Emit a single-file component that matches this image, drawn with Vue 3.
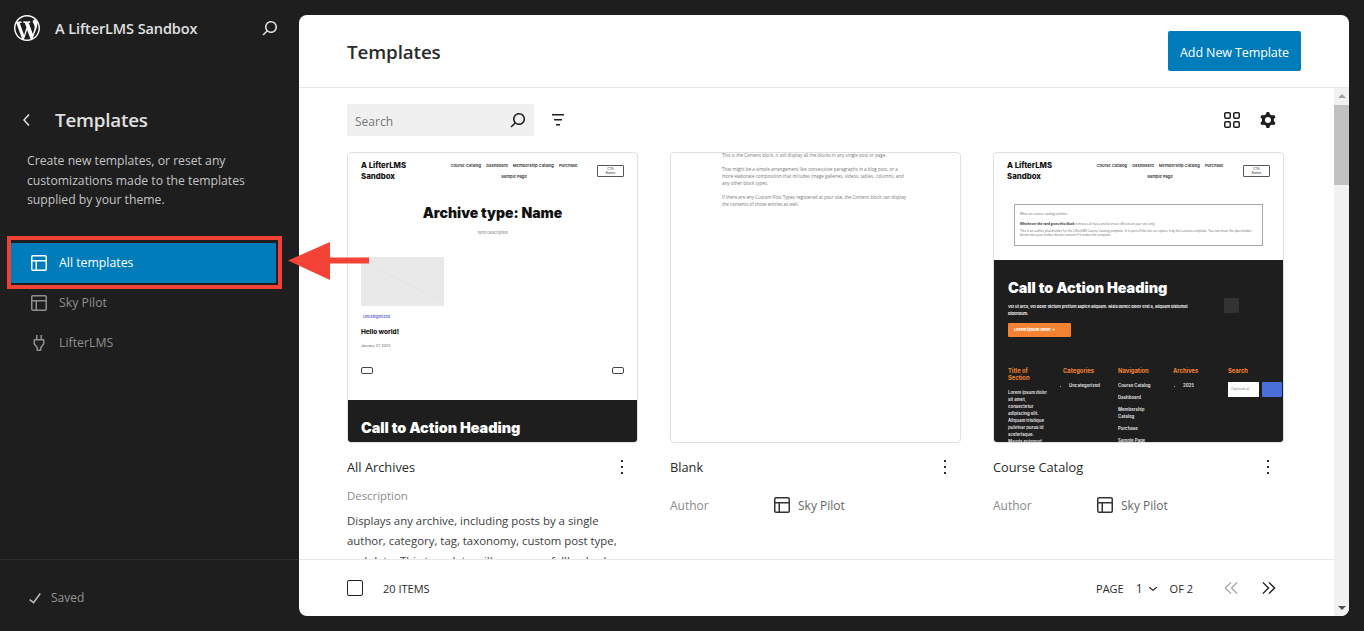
<script setup>
const icons = {
  search: 'M13 5c-3.3 0-6 2.7-6 6 0 1.4.5 2.7 1.3 3.7l-3.8 3.8 1.1 1.1 3.8-3.8c1 .8 2.3 1.3 3.7 1.3 3.3 0 6-2.7 6-6S16.3 5 13 5zm0 10.5c-2.5 0-4.5-2-4.5-4.5s2-4.5 4.5-4.5 4.5 2 4.5 4.5-2 4.5-4.5 4.5z',
  layout: 'M18 5.5H6a.5.5 0 00-.5.5v3h13V6a.5.5 0 00-.5-.5zm.5 5H10v8h8a.5.5 0 00.5-.5v-7.5zm-10 0h-3V18a.5.5 0 00.5.5h2.5v-8zM6 4h12a2 2 0 012 2v12a2 2 0 01-2 2H6a2 2 0 01-2-2V6a2 2 0 012-2z',
  chevronLeft: 'M14.6 7l-1.2-1L8 12l5.4 6 1.2-1-4.6-5z',
  plugin: 'M10.5 4v4h3V4H15v4h1.5a1 1 0 011 1v4l-3 4v2a1 1 0 01-1 1h-3a1 1 0 01-1-1v-2l-3-4V9a1 1 0 011-1H9V4h1.5zm.5 12.5v2h2v-2l3-4v-3H8v3l3 4z',
  check: 'M16.7 7.1l-6.3 8.5-3.3-2.5-.9 1.2 4.5 3.4L17.9 8z',
  funnel: 'M10 17.5H14V16H10V17.5ZM6 6V7.5H18V6H6ZM8 12.5H16V11H8V12.5Z',
  grid: 'M6 5.5h3a.5.5 0 01.5.5v3a.5.5 0 01-.5.5H6a.5.5 0 01-.5-.5V6a.5.5 0 01.5-.5zM4 6a2 2 0 012-2h3a2 2 0 012 2v3a2 2 0 01-2 2H6a2 2 0 01-2-2V6zm11-.5h3a.5.5 0 01.5.5v3a.5.5 0 01-.5.5h-3a.5.5 0 01-.5-.5V6a.5.5 0 01.5-.5zM13 6a2 2 0 012-2h3a2 2 0 012 2v3a2 2 0 01-2 2h-3a2 2 0 01-2-2V6zm5 8.5h-3a.5.5 0 00-.5.5v3a.5.5 0 00.5.5h3a.5.5 0 00.5-.5v-3a.5.5 0 00-.5-.5zM15 13a2 2 0 00-2 2v3a2 2 0 002 2h3a2 2 0 002-2v-3a2 2 0 00-2-2h-3zm-9 1.5h3a.5.5 0 01.5.5v3a.5.5 0 01-.5.5H6a.5.5 0 01-.5-.5v-3a.5.5 0 01.5-.5zM4 15a2 2 0 012-2h3a2 2 0 012 2v3a2 2 0 01-2 2H6a2 2 0 01-2-2v-3z',
  cog: 'M10.289 4.836A1 1 0 0111.275 4h1.306a1 1 0 01.987.836l.244 1.466c.787.26 1.503.679 2.108 1.218l1.393-.522a1 1 0 011.216.437l.653 1.13a1 1 0 01-.23 1.273l-1.148.944a6.025 6.025 0 010 2.435l1.149.946a1 1 0 01.23 1.272l-.653 1.13a1 1 0 01-1.216.437l-1.394-.522c-.605.54-1.32.958-2.108 1.218l-.244 1.466a1 1 0 01-.987.836h-1.306a1 1 0 01-.986-.836l-.244-1.466a5.995 5.995 0 01-2.108-1.218l-1.394.522a1 1 0 01-1.217-.436l-.653-1.131a1 1 0 01.23-1.272l1.149-.946a6.026 6.026 0 010-2.435l-1.148-.944a1 1 0 01-.23-1.272l.653-1.131a1 1 0 011.217-.437l1.393.522a5.994 5.994 0 012.108-1.218l.244-1.466zM14.929 12a3 3 0 11-6 0 3 3 0 016 0z',
  more: 'M13 19h-2v-2h2v2zm0-6h-2v-2h2v2zm0-6h-2V5h2v2z',
  down: 'M17.5 11.6L12 16l-5.5-4.4.9-1.2L12 14l4.5-3.6 1 1.2z'
}
const wp = 'M20 10c0-5.51-4.49-10-10-10C4.48 0 0 4.49 0 10c0 5.52 4.48 10 10 10 5.51 0 10-4.48 10-10zM7.78 15.37L4.37 6.22c.55-.02 1.17-.08 1.17-.08.5-.06.44-1.13-.06-1.11 0 0-1.45.11-2.37.11-.18 0-.37 0-.58-.01C4.12 2.69 6.87 1.11 10 1.11c2.33 0 4.45.87 6.05 2.34-.68-.11-1.65.39-1.65 1.58 0 .74.45 1.36.9 2.1.35.61.55 1.36.55 2.46 0 1.49-1.4 5-1.4 5l-3.03-8.37c.54-.02.82-.17.82-.17.5-.05.44-1.25-.06-1.22 0 0-1.44.12-2.38.12-.87 0-2.33-.12-2.33-.12-.5-.03-.56 1.2-.06 1.22l.92.08 1.26 3.41zM17.41 10c.24-.64.74-1.87.43-4.25.7 1.29 1.05 2.71 1.05 4.25 0 3.29-1.73 6.24-4.4 7.78.97-2.59 1.94-5.2 2.92-7.78zM6.1 18.09C3.12 16.65 1.11 13.53 1.11 10c0-1.3.23-2.48.72-3.59C3.25 10.3 4.67 14.2 6.1 18.09zm4.03-6.63l2.58 6.98c-.86.29-1.76.45-2.71.45-.79 0-1.57-.11-2.29-.33.81-2.38 1.62-4.74 2.42-7.1z'
const navLinks = ['Course Catalog', 'Dashboard', 'Membership Catalog', 'Purchase', 'Sample Page']
</script>

<template>
  <div class="root">
    <aside class="side">
      <div class="brand">
        <svg class="wp" viewBox="0 0 20 20"><path :d="wp" fill="#fff" fill-rule="evenodd" /></svg>
        <span class="site">A LifterLMS Sandbox</span>
        <svg class="i24 brand-search" viewBox="0 0 24 24"><path :d="icons.search" /></svg>
      </div>
      <div class="sec-head">
        <svg class="i24 back" viewBox="0 0 24 24"><path :d="icons.chevronLeft" /></svg>
        <h2>Templates</h2>
      </div>
      <p class="sec-desc">Create new templates, or reset any customizations made to the templates supplied by your theme.</p>
      <nav class="snav">
        <a class="sitem active"><svg class="i24" viewBox="0 0 24 24"><path :d="icons.layout" fill-rule="evenodd" /></svg>All templates</a>
        <a class="sitem"><svg class="i24" viewBox="0 0 24 24"><path :d="icons.layout" fill-rule="evenodd" /></svg>Sky Pilot</a>
        <a class="sitem"><svg class="i24" viewBox="0 0 24 24"><path :d="icons.plugin" fill-rule="evenodd" /></svg>LifterLMS</a>
      </nav>
      <div class="saved">
        <svg class="i24" viewBox="0 0 24 24"><path :d="icons.check" /></svg>
        <span>Saved</span>
      </div>
    </aside>

    <main class="panel">
      <header class="phead">
        <h1>Templates</h1>
        <button class="add">Add New Template</button>
      </header>
      <div class="pbody">
        <div class="pcol">
          <div class="scroll">
            <div class="tools">
              <div class="search">
                <span>Search</span>
                <svg class="i24" viewBox="0 0 24 24"><path :d="icons.search" /></svg>
              </div>
              <svg class="i24 funnel" viewBox="0 0 24 24"><path :d="icons.funnel" /></svg>
              <span class="spacer"></span>
              <svg class="i24" viewBox="0 0 24 24"><path :d="icons.grid" fill-rule="evenodd" /></svg>
              <svg class="i24 cog" viewBox="0 0 24 24"><path :d="icons.cog" fill-rule="evenodd" /></svg>
            </div>

            <div class="cards">
              <article class="card">
                <div class="thumb">
                  <div class="m-head">
                    <b class="m-logo">A LifterLMS Sandbox</b>
                    <div class="m-links"><span v-for="l in navLinks" :key="l">{{ l }}</span></div>
                    <span class="m-cta">CTA Button</span>
                  </div>
                  <div class="m-title">Archive type: Name</div>
                  <div class="m-term">Term Description</div>
                  <div class="m-img"></div>
                  <div class="m-cat">Uncategorized</div>
                  <div class="m-post">Hello world!</div>
                  <div class="m-date">January 27, 2025</div>
                  <div class="m-pager"><i></i><i></i></div>
                  <div class="m-dark one"><div class="m-cta-h">Call to Action Heading</div></div>
                </div>
                <div class="c-title"><span>All Archives</span><svg class="i24" viewBox="0 0 24 24"><path :d="icons.more" /></svg></div>
                <div class="c-label">Description</div>
                <p class="c-text">Displays any archive, including posts by a single author, category, tag, taxonomy, custom post type, and date. This template will serve as a fallback when</p>
              </article>

              <article class="card">
                <div class="thumb blank">
                  <p>This is the Content block, it will display all the blocks in any single post or page.</p>
                  <p>That might be a simple arrangement like consecutive paragraphs in a blog post, or a more elaborate composition that includes image galleries, videos, tables, columns, and any other block types.</p>
                  <p>If there are any Custom Post Types registered at your site, the Content block can display the contents of those entries as well.</p>
                </div>
                <div class="c-title"><span>Blank</span><svg class="i24" viewBox="0 0 24 24"><path :d="icons.more" /></svg></div>
                <div class="c-meta"><span class="lab">Author</span><svg class="i24" viewBox="0 0 24 24"><path :d="icons.layout" fill-rule="evenodd" /></svg><span>Sky Pilot</span></div>
              </article>

              <article class="card">
                <div class="thumb">
                  <div class="m-head">
                    <b class="m-logo">A LifterLMS Sandbox</b>
                    <div class="m-links"><span v-for="l in navLinks" :key="l">{{ l }}</span></div>
                    <span class="m-cta">CTA Button</span>
                  </div>
                  <div class="m-box">
                    <p>What are course catalog unlimits</p>
                    <p><b>Whichever the card gives this block</b> removes all noise preferences offered on your site only.</p>
                    <p>This is an outline placeholder for the LifterLMS Course Catalog template. It is part of this site so replace it by the Lessons template. You can move the placeholder blocks into your further blocks content if it makes the template.</p>
                  </div>
                  <div class="m-dark three">
                    <div class="m-cta-h">Call to Action Heading</div>
                    <div class="m-cta-row">
                      <p>Vel ut arcu, vel dolor dictum pretium sapien aliquam. Nisia donec dolor erat a, aliquam distumst bibendum.</p>
                      <i class="m-sq"></i>
                    </div>
                    <span class="m-orange">Lorem ipsum dolor →</span>
                    <div class="m-cols">
                      <div><h6>Title of Section</h6><p>Lorem ipsum dolor sit amet, consectetur adipiscing elit. Aliquam tristique pulvinar purus id scelerisque. Mauris euismod lacus id</p></div>
                      <div><h6>Categories</h6><ul><li>Uncategorized</li></ul></div>
                      <div><h6>Navigation</h6><p class="lk">Course Catalog</p><p class="lk">Dashboard</p><p class="lk">Membership Catalog</p><p class="lk">Purchase</p><p class="lk">Sample Page</p></div>
                      <div><h6>Archives</h6><ul class="ar"><li>2025</li></ul></div>
                      <div><h6>Search</h6><div class="m-s"><span>Optional pl</span><i></i></div></div>
                    </div>
                  </div>
                </div>
                <div class="c-title"><span>Course Catalog</span><svg class="i24" viewBox="0 0 24 24"><path :d="icons.more" /></svg></div>
                <div class="c-meta"><span class="lab">Author</span><svg class="i24" viewBox="0 0 24 24"><path :d="icons.layout" fill-rule="evenodd" /></svg><span>Sky Pilot</span></div>
              </article>
            </div>
          </div>

          <footer class="pfoot">
            <span class="cb"></span>
            <span class="items">20 ITEMS</span>
            <span class="spacer"></span>
            <span class="pg">PAGE</span>
            <span class="pg num">1</span>
            <svg class="i24 pg-down" viewBox="0 0 24 24"><path :d="icons.down" /></svg>
            <span class="pg">OF 2</span>
            <svg class="dbl off" viewBox="0 0 16 14"><path d="M7.5 1 1.5 7l6 6M14 1 8 7l6 6" /></svg>
            <svg class="dbl" viewBox="0 0 16 14"><path d="M2 1l6 6-6 6M8.500 1l6 6-6 6" /></svg>
          </footer>
        </div>
        <div class="sbar">
          <i class="arr up"></i>
          <i class="thumbbar"></i>
          <i class="arr dn"></i>
        </div>
      </div>
    </main>

    <div class="frame"></div>
    <svg class="arrow" viewBox="0 0 82 38"><path d="M0 18.500 42 0v15.500h39v6H42V38z" /></svg>
  </div>
</template>

<style>
html, body { margin: 0; background: #1e1e1e; }
</style>

<style scoped>
.root {
  position: relative; display: flex; width: 1364px; height: 631px; overflow: hidden;
  background: #1e1e1e; color: #1e1e1e;
  font-family: "Open Sans", "Noto Sans", sans-serif; font-size: 12px;
}
.i24 { width: 24px; height: 24px; flex: none; fill: currentColor; }
.spacer { flex: 1; }
h1, h2, p { margin: 0; }

/* sidebar */
.side { width: 299px; flex: none; display: flex; flex-direction: column; color: #e0e0e0; }
.brand { display: flex; align-items: center; height: 26px; margin: 15px 17px 0 14px; }
.wp { width: 26px; height: 26px; flex: none; }
.site { margin-left: 15px; font-size: 14.500px; font-weight: 600; letter-spacing: -.1px; color: #e0e0e0; }
.brand-search { margin-left: auto; color: #e0e0e0; }
.sec-head { display: flex; align-items: center; height: 30px; margin: 64px 0 0 15px; }
.back { color: #e0e0e0; }
.sec-head h2 { margin-left: 16px; font-size: 18.800px; font-weight: 600; letter-spacing: -.2px; color: #e0e0e0; }
.sec-desc { margin: 16px 30px 0 27px; font-size: 12.200px; line-height: 19.500px; color: #c4c4c4; }
.snav { display: flex; flex-direction: column; margin: 33px 23px 0 11px; }
.sitem { display: flex; align-items: center; gap: 8px; height: 40px; padding-left: 16px; font-size: 12.300px; color: #8f8f8f; }
.sitem.active { background: #007cba; color: #fff; font-weight: 500; border-radius: 1px; }
.saved { display: flex; align-items: center; gap: 4px; margin-top: auto; height: 72px; padding: 4px 0 0 23px; box-sizing: border-box; border-top: 1px solid #2f2f2f; color: #949494; font-size: 12px; }
.saved .i24 { color: #bdbdbd; }

/* panel */
.panel { flex: 1; margin: 15px 15px 15px 0; background: #fff; border-radius: 8px; overflow: hidden; display: flex; flex-direction: column; }
.phead { height: 73px; flex: none; box-sizing: border-box; border-bottom: 1px solid #e8e8e8; display: flex; align-items: center; justify-content: space-between; padding: 0 48px; }
.phead h1 { margin-top: 2px; font-size: 18.800px; font-weight: 600; letter-spacing: -.1px; color: #2a2a2a; }
.add { width: 133px; height: 40px; border: 0; border-radius: 2px; background: #007cba; color: #fff; font: 500 12.500px "Open Sans", sans-serif; letter-spacing: -.1px; padding: 2px 0 0; }
.pbody { flex: 1; min-height: 0; display: flex; }
.pcol { flex: 1; min-width: 0; display: flex; flex-direction: column; }
.scroll { flex: 1; min-height: 0; overflow: hidden; padding: 16px 50px 0 48px; }
.tools { display: flex; align-items: center; height: 32px; }
.search { width: 187px; height: 32px; box-sizing: border-box; background: #f0f0f0; display: flex; align-items: center; justify-content: space-between; padding: 2px 4px 0 8px; color: #757575; font-size: 12px; }
.search .i24 { margin-top: -2px; color: #1e1e1e; }
.funnel { margin-left: 12px; }
.cog { margin-left: 12px; margin-right: 4px; }

.cards { display: grid; grid-template-columns: repeat(3, 291px); gap: 32px; margin-top: 16px; }
.thumb { width: 291px; height: 291px; box-sizing: border-box; border: 1px solid #e0e0e0; border-radius: 4px; overflow: hidden; background: #fff; font-family: Inter, sans-serif; display: flow-root; }
.c-title { display: flex; align-items: center; justify-content: space-between; height: 24px; margin-top: 12px; padding-right: 4px; font-size: 12.800px; font-weight: 500; color: #2a2a2a; }
.c-label { margin-top: 7px; height: 20px; line-height: 20px; color: #8a8a8a; font-size: 11.400px; }
.c-text { margin-top: 5px; line-height: 20px; font-size: 11.400px; color: #3c3c3c; }
.c-meta { display: flex; align-items: center; height: 24px; margin-top: 14px; color: #666; font-size: 12px; }
.c-meta .lab { width: 100px; color: #8a8a8a; }
.c-meta .i24 { margin-right: 4px; color: #333; }

/* mini page */
.m-head { display: flex; align-items: flex-start; padding: 7px 13px 0; height: 40px; box-sizing: border-box; }
.m-logo { width: 80px; padding-right: 25px; box-sizing: border-box; font-size: 7.800px; line-height: 11px; font-weight: 800; color: #111; flex: none; }
.m-links { width: 146px; flex: none; display: flex; flex-wrap: wrap; justify-content: center; gap: 0 5px; font-size: 4.100px; line-height: 11px; font-weight: 600; color: #333; }
.m-cta { margin: 5px 0 0 auto; width: 27px; height: 12px; box-sizing: border-box; border: 1px solid #555; border-radius: 1px; font-size: 3.200px; line-height: 4px; text-align: center; padding: 1px 6px; flex: none; }
.m-title { margin-top: 11px; text-align: center; font-size: 14px; line-height: 18px; font-weight: 900; color: #111; }
.m-term { margin-top: 8px; text-align: center; font-size: 3.800px; line-height: 5px; color: #777; }
.m-img { width: 83px; height: 49px; margin: 22px 0 0 13px; background: linear-gradient(25deg, #e9e9e9 49.500%, #e0e0e0 50%, #e9e9e9 51%, #e9e9e9); }
.m-cat { margin: 8px 0 0 15px; font-size: 3.800px; line-height: 5px; font-weight: 600; color: #5a64c8; }
.m-post { margin: 9px 0 0 13px; font-size: 6.400px; line-height: 8px; font-weight: 800; color: #111; }
.m-date { margin: 8px 0 0 13px; font-size: 3.600px; line-height: 5px; color: #666; }
.m-pager { display: flex; justify-content: space-between; margin: 18px 13px 0; }
.m-pager i { width: 12px; height: 7px; box-sizing: border-box; border: 1px solid #444; border-radius: 2px; }
.m-dark { background: #1e1e1e; color: #fff; overflow: hidden; }
.m-dark.one { margin-top: 26px; height: 42px; padding: 20px 13px 0; box-sizing: border-box; }
.m-cta-h { font-size: 14.400px; line-height: 16px; font-weight: 900; color: #fff; white-space: nowrap; }
.m-box { margin: 11px 20px 0; height: 42px; box-sizing: border-box; border: 1px solid #a8a8a8; padding: 7px 5px 0; font-family: "Open Sans", sans-serif; font-size: 3.100px; line-height: 4px; color: #666; overflow: hidden; }
.m-box p { margin-bottom: 6px; }
.m-box p:nth-child(3) { margin-top: -3px; }
.m-box b { color: #333; }
.m-dark.three { margin-top: 14px; height: 200px; padding: 20px 1px 0 14px; box-sizing: border-box; }
.m-cta-row { display: flex; margin-top: 6px; }
.m-cta-row p { width: 198px; font-size: 3.900px; line-height: 7px; font-weight: 700; margin-top: 1px; color: #eee; }
.m-sq { width: 15px; height: 15px; margin: -4px 0 0 18px; background: #333; flex: none; }
.m-orange { display: block; width: 63px; height: 14px; margin-top: 6px; border-radius: 1px; background: #f58230; font-size: 4px; line-height: 14px; font-weight: 800; padding-left: 6px; box-sizing: border-box; }
.m-cols { display: grid; grid-template-columns: 55px 55px 55px 55px 55px; margin-top: 30px; font-size: 4.300px; line-height: 7px; font-weight: 700; color: #ddd; }
.m-cols h6 { margin: 0 0 8px; font-size: 5.800px; line-height: 7px; font-weight: 700; color: #f58230; }
.m-cols > div { padding-right: 14px; min-width: 0; }
.m-cols > div:last-child { padding-right: 0; }
.m-cols ul { margin: 0; padding-left: 6px; white-space: nowrap; }
.m-cols ul.ar { padding-left: 10px; }
.m-cols .lk { margin-bottom: 5px; }
.m-s { display: flex; gap: 3px; height: 15px; width: 54px; }
.m-s span { width: 31px; background: #fff; color: #888; font-size: 3.600px; line-height: 15px; padding-left: 3px; box-sizing: border-box; font-weight: 400; white-space: nowrap; overflow: hidden; }
.m-s i { width: 20px; background: #4a6fd8; border-radius: 1px; }

.blank { padding: 0 52px 0 51px; font-family: "Open Sans", sans-serif; font-size: 4.500px; line-height: 7px; color: #777; }
.blank p { margin-bottom: 7px; margin-top: 0; }
.blank p:first-child { margin-top: -1px; }

/* footer */
.pfoot { height: 57px; flex: none; box-sizing: border-box; border-top: 1px solid #e8e8e8; display: flex; align-items: center; padding: 0 58px 0 48px; font-size: 11px; color: #2a2a2a; }
.cb { width: 16px; height: 16px; box-sizing: border-box; border: 1px solid #1e1e1e; border-radius: 2px; }
.items { margin-left: 20px; font-weight: 500; }
.pg { font-size: 11px; }
.num { margin-left: 12px; font-size: 12px; }
.pg-down { width: 18px; height: 18px; margin: 0 8px 0 1px; }
.dbl { width: 15px; height: 14px; margin-left: 31px; fill: none; stroke: #1e1e1e; stroke-width: 1.500; }
.dbl:last-child { margin-left: 22px; }
.dbl.off { stroke: #a5a5a5; }

/* scrollbar */
.sbar { width: 15px; flex: none; background: #f1f1f1; display: flex; flex-direction: column; align-items: center; }
.arr { width: 0; height: 0; border-left: 4px solid transparent; border-right: 4px solid transparent; }
.arr.up { border-bottom: 4px solid #a3a3a3; margin-top: 6px; }
.arr.dn { border-top: 4px solid #505050; margin: auto 0 6px; }
.thumbbar { width: 15px; height: 80px; background: #c1c1c1; margin-top: 7px; }

/* annotation over the screenshot */
.frame { position: absolute; left: 7px; top: 236px; width: 275px; height: 53px; box-sizing: border-box; border: 4px solid #ef4136; pointer-events: none; }
.arrow { position: absolute; left: 288px; top: 242px; width: 82px; height: 38px; fill: #f44336; }
</style>
